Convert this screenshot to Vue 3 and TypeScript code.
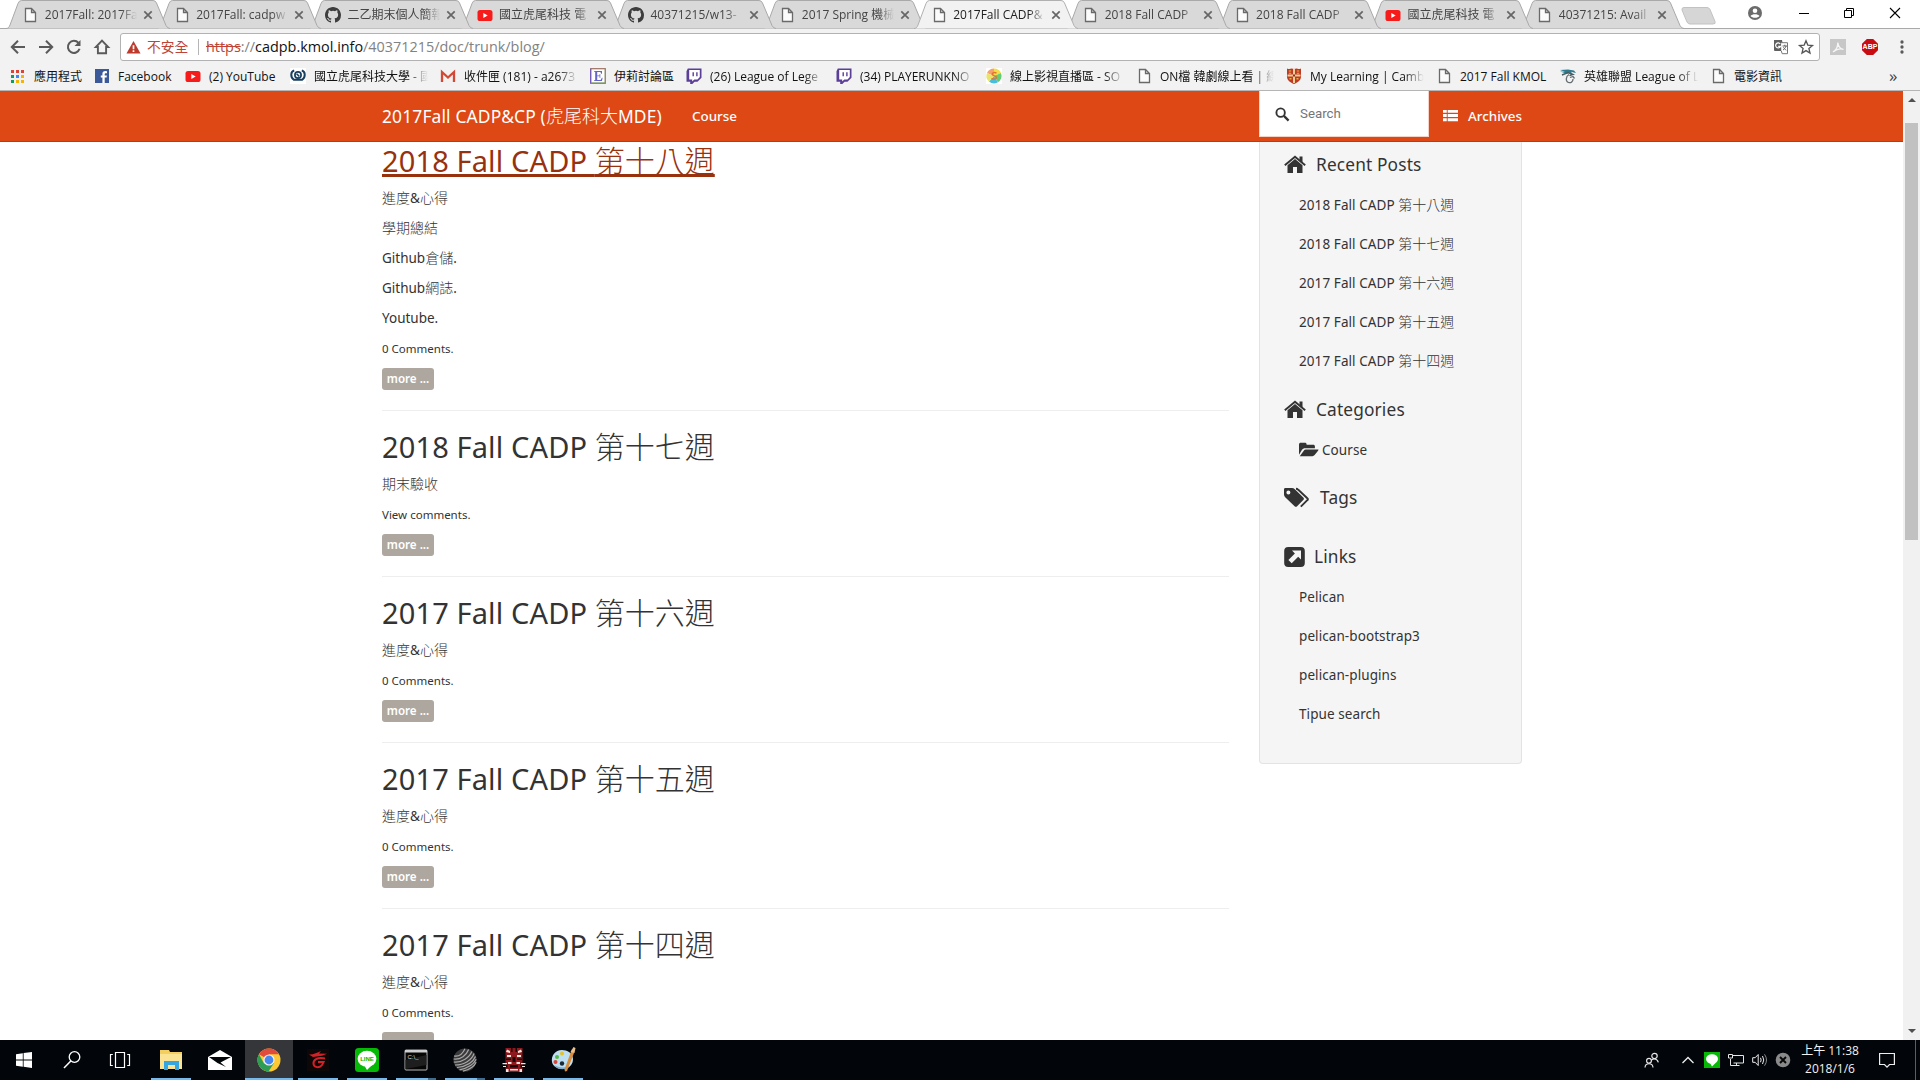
<script setup lang="ts">
interface Run { text: string; zh: boolean }
interface Tab { icon: string; title: string; active?: boolean }
interface Bookmark { icon: string; label: string; width: number }
interface Post { title: string; body: string[]; comments: string; hover?: boolean }
interface Task { name: string; state: 'none' | 'open' | 'active' | 'multi' }

function runs(s: string): Run[] {
  return (s.match(/[\u3000-\u9fff]+|[^\u3000-\u9fff]+/g) ?? []).map(text => ({
    text,
    zh: /[\u3000-\u9fff]/.test(text),
  }))
}

const page = '<path d="M3.500 1.500h6l4 4v9h-10z M9.500 1.500v4h4" fill="#fbfbfb" stroke="#6a6a6a" stroke-width="1.300"/>'
const youtube = '<rect x="0.500" y="3" width="15" height="11" rx="2.600" fill="#f61c1c"/><path d="M6.300 6v5l4.400-2.500z" fill="#fff"/>'
const github = '<path fill="#3d3d3d" d="M8 0C3.58 0 0 3.58 0 8c0 3.54 2.29 6.53 5.47 7.59.4.07.55-.17.55-.38v-1.49c-2.01.37-2.53-.49-2.69-.94-.09-.23-.48-.94-.82-1.13-.28-.15-.68-.52-.01-.53.63-.01 1.08.58 1.23.82.72 1.21 1.87.87 2.33.66.07-.52.28-.87.51-1.07-1.78-.2-3.64-.89-3.64-3.95 0-.87.31-1.59.82-2.15-.08-.2-.36-1.02.08-2.12 0 0 .67-.21 2.2.82a7.6 7.6 0 0 1 4 0c1.53-1.04 2.2-.82 2.2-.82.44 1.1.16 1.92.08 2.12.51.56.82 1.27.82 2.15 0 3.07-1.87 3.75-3.65 3.95.29.25.54.73.54 1.48v2.2c0 .21.15.46.55.38A8 8 0 0 0 16 8c0-4.42-3.58-8-8-8z"/>'
const twitch = '<path fill="#5a3e97" d="M1.800.5h13.700v9.300l-4 4H8.600l-2.300 2.200H4.200v-2.200H.500V3.300z"/><path fill="#fff" d="M3.200 2h10.600v7.100l-2.300 2.300H8.300l-2.100 2v-2h-3z"/><path fill="#5a3e97" d="M6.500 4.300h1.400v4H6.500zM10.200 4.300h1.400v4h-1.400z"/>'

const icons: Record<string, string> = {
  page, youtube, github, twitch,
  apps: '<path fill="#db4437" d="M1 2h3v3H1zM6 2h3v3H6zM11 2h3v3h-3z"/><path fill="#0f9d58" d="M1 7h3v3H1z"/><path fill="#4285f4" d="M6 7h3v3H6z"/><path fill="#f4b400" d="M11 7h3v3h-3zM6 12h3v3H6zM11 12h3v3h-3z"/><path fill="#0f9d58" d="M1 12h3v3H1z"/>',
  facebook: '<rect x="1" y="1" width="14" height="14" fill="#3b5998"/><path fill="#fff" d="M8.400 15V9.500H6.800V7.400h1.600V6c0-2 1.100-2.900 2.900-2.900l1.700.1v2h-1.200c-.9 0-1.100.4-1.100 1.100v1.100h2.200l-.3 2.100h-1.900V15z"/>',
  nfu: '<rect width="16" height="16" fill="#fff"/><path d="M4.200 2.500C.500 3.500.200 9 3.800 11.800h8.400c3.600-2.800 3.300-8.300-.4-9.300" fill="none" stroke="#173f5f" stroke-width="2"/><circle cx="8" cy="7" r="3.100" fill="none" stroke="#173f5f" stroke-width="1.700"/><path d="M6.600 5.800l2.600 2.600" stroke="#173f5f" stroke-width="1.500"/>',
  gmail: '<rect x="1" y="3" width="14" height="11" fill="#f3f0ee"/><path d="M2 14V4l6 5.500L14 4v10" fill="none" stroke="#d14836" stroke-width="2.300"/>',
  eyny: '<rect x=".7" y=".7" width="14.600" height="14.600" fill="#fff" stroke="#9b6f5d" stroke-width="1.200"/><path d="M.700 15.300V.700" stroke="#6a56c8"/><path d="M15.300 1v14H1" fill="none" stroke="#71a060"/><path d="M4 3h8v2.800h-.8L10.400 4H7.200v3.400h2.400V6h.7v4h-.7V8.300H7.200V12h3.400l1.300-2.200h.7L12 13H4v-.8h1.200V3.800H4z" fill="#6464cc"/>',
  rainbow: '<rect width="16" height="16" fill="#fff"/><path d="M8 8L1 5a7.500 7.500 0 0 1 7-4.500z" fill="#f5a070"/><path d="M8 8V.5A7.500 7.500 0 0 1 15 5z" fill="#f4de48"/><path d="M8 8l7-3a7.500 7.500 0 0 1-3 9.200z" fill="#62cd75"/><path d="M8 8l4 6.200A7.500 7.500 0 0 1 3 13.500z" fill="#48bedb"/><path d="M8 8l-5 5.500A7.500 7.500 0 0 1 1 5z" fill="#e9e36b"/><path d="M10.500 5.200C9 3.800 5.800 4.500 6.400 6.600c.5 1.700 3.800 1 4 2.800.1 2-3.400 2.300-4.800.8" fill="none" stroke="#e4732e" stroke-width="1.400"/>',
  shield: '<path d="M1 .5c2 .8 3.500.5 4.500 0 1.500.6 3.500.6 5 0 1 .5 2.500.8 4.500 0v8c0 4-3.500 6-7 7.500-3.500-1.500-7-3.500-7-7.500z" fill="#bd3a25"/><path d="M8 1v14M1.500 7.500h13" stroke="#f1cf94" stroke-width="2"/><path d="M2.800 2.500h2.400v1H2.800zM2.800 4.700h2.400v1H2.800zM10.800 2.500h2.400v1h-2.400zM10.800 4.700h2.400v1h-2.400zM3.500 10h2v1.500h-2zM10.500 10h2v1.500h-2z" fill="#e9b344"/><path d="M7 6.500h2v2H7z" fill="#8e2b1d"/>',
  lol: '<path d="M0 2l8-.5 6 1 2 2.500-5-1.300 2 3-3-2-3 1L0 3.500l5 .2z" fill="#2c7b8f"/><path d="M2 7l6-2.500 5 2-3.500 1.200" fill="none" stroke="#4d5a60" stroke-width="1.400"/><path d="M9 6.500c-3.500 2-3.500 7-.5 8 2.500.8 4.500-1 4.500-3.500M10 9.500l3-1 1.500 2" fill="none" stroke="#636d72" stroke-width="1.300"/>',
  back: '<path d="M15 8H2M8 1.800L1.800 8 8 14.200" fill="none" stroke="#5a5a5a" stroke-width="2"/>',
  forward: '<path d="M1 8h13M8 1.800L14.200 8 8 14.200" fill="none" stroke="#5a5a5a" stroke-width="2"/>',
  reload: '<path d="M13.600 9.800A6 6 0 1 1 12.500 4" fill="none" stroke="#5a5a5a" stroke-width="2"/><path d="M14.500 1v6h-6z" fill="#5a5a5a"/>',
  home: '<path d="M8 1.600L14.200 8h-2.100v6.300H3.900V8H1.800z" fill="none" stroke="#5a5a5a" stroke-width="1.900"/>',
  warn: '<path d="M8 1l7.500 13.500H.5z" fill="#bd3a2c"/><path d="M7.100 5.500h1.800v4.300H7.100zM7.100 11h1.800v1.800H7.100z" fill="#fff"/>',
  translate: '<path d="M1 1h8l2 11H2a1 1 0 0 1-1-1z" fill="#606060"/><path d="M8 3.700h6.500v11H9.200L8.300 12" fill="#fff" stroke="#777"/><path d="M7.200 5a2.500 2.500 0 1 0 .3 2.300H5.200" fill="none" stroke="#fff" stroke-width="1.200"/><path d="M9.500 7h4.500M11.800 5.700V7M13 7c-.4 2-1.500 3-3 4M10.500 8.200c.8 1.500 1.600 2.200 2.800 3" fill="none" stroke="#666"/>',
  star: '<path d="M8 1.800l1.800 4.300 4.700.4-3.600 3 1.100 4.600L8 11.600l-4 2.500 1.100-4.600-3.600-3 4.700-.4z" fill="none" stroke="#555" stroke-width="1.300"/>',
  pdf: '<rect width="16" height="16" fill="#c7c7c7"/><path d="M3 13c3-2 5-5 4.800-9.500C8.500 8 10 10 13.500 10.300 9.500 9 6 10.500 3 13z" fill="none" stroke="#f6f6f6" stroke-width="1.300"/>',
  dots: '<circle cx="8" cy="2.300" r="1.900" fill="#5a5a5a"/><circle cx="8" cy="8" r="1.900" fill="#5a5a5a"/><circle cx="8" cy="13.700" r="1.900" fill="#5a5a5a"/>',
  user: '<circle cx="8" cy="8" r="7" fill="#6b6b6b"/><circle cx="8" cy="5.800" r="2.300" fill="#fff"/><path d="M3.500 11c1.600-2.300 7.400-2.300 9 0-1.700 2.400-7.300 2.400-9 0z" fill="#fff"/>',
  min: '<path d="M3 8.500h10" stroke="#000"/>',
  restore: '<path d="M3.500 5.500h7v7h-7zM5.500 5.500v-2h7v7h-2" fill="none" stroke="#000"/>',
  close: '<path d="M3 3l10 10M13 3L3 13" stroke="#000" stroke-width="1.100"/>',
  tabclose: '<path d="M4.300 4.300l7.400 7.400M11.700 4.300l-7.400 7.400" stroke="#666" stroke-width="1.700"/>',
  search: '<circle cx="6" cy="6" r="4.500" fill="none" stroke="#333" stroke-width="2"/><path d="M9.500 9.500l5 5" stroke="#333" stroke-width="2.400"/>',
  list: '<path d="M0 2h4v3H0zM5 2h11v3H5zM0 6.500h4v3H0zM5 6.500h11v3H5zM0 11h4v3H0zM5 11h11v3H5z" fill="#fff"/>',
}

const sideIcons: Record<string, string> = {
  home: '<path d="M11 5l7.500 6.200V19H13V13H9v6H3.500V11.200z" fill="#333"/><path d="M.8 11.300L11 2.700l10.200 8.600" fill="none" stroke="#333" stroke-width="1.900"/><path d="M15.500 2.500h3V9l-3-2.500z" fill="#333"/>',
  folder: '<path d="M0 14V3.200C0 2 .8 1.500 1.800 1.500h4.500c1 0 1.700.7 1.700 1.700v.3h7c1 0 1.700.7 1.700 1.700v2H6.500c-1.500 0-2.600.6-3.500 1.700z" fill="#333"/><path d="M.8 15.500l4-5.500c.6-.9 1.400-1.400 2.400-1.400H20.500c-.1.400-.2.700-.5 1.100l-3.600 4.700c-.6.700-1.400 1.100-2.300 1.100z" fill="#333"/>',
  tags: '<path fill-rule="evenodd" d="M0 2.500C0 1.500.500 1 1.500 1H8c1 0 2 .5 2.800 1.200l8.500 8.300c.8.8.8 1.700 0 2.500l-6.200 6.200c-.8.8-1.700.8-2.500 0L1.200 10.300C.5 9.500 0 8.500 0 7.500zM4.400 3.500a2 2 0 1 0 0 4 2 2 0 0 0 0-4z" fill="#333"/><path d="M12 1.800c1 0 1.600.3 2.300 1l9 8.400c.8.700.8 1.300 0 2l-6.500 6.500" fill="none" stroke="#333" stroke-width="1.900"/>',
  link: '<rect x=".2" y="1" width="20.600" height="20" rx="4" fill="#333"/><path d="M8 4.500h9v9l-2.800-2.800-6.500 6.500-3.300-3.300 6.500-6.500z" fill="#f5f5f5"/>',
}

const tabs: Tab[] = [
  { icon: 'page', title: '2017Fall: 2017Fa' },
  { icon: 'page', title: '2017Fall: cadpw' },
  { icon: 'github', title: '二乙期末個人簡報' },
  { icon: 'youtube', title: '國立虎尾科技 電' },
  { icon: 'github', title: '40371215/w13-' },
  { icon: 'page', title: '2017 Spring 機械' },
  { icon: 'page', title: '2017Fall CADP&', active: true },
  { icon: 'page', title: '2018 Fall CADP' },
  { icon: 'page', title: '2018 Fall CADP' },
  { icon: 'youtube', title: '國立虎尾科技 電' },
  { icon: 'page', title: '40371215: Avail' },
]

const bookmarks: Bookmark[] = [
  { icon: 'apps', label: '應用程式', width: 48 },
  { icon: 'facebook', label: 'Facebook', width: 55 },
  { icon: 'youtube', label: '(2) YouTube', width: 69 },
  { icon: 'nfu', label: '國立虎尾科技大學 - 國', width: 114 },
  { icon: 'gmail', label: '收件匣 (181) - a2673', width: 114 },
  { icon: 'eyny', label: '伊莉討論區', width: 60 },
  { icon: 'twitch', label: '(26) League of Lege', width: 114 },
  { icon: 'twitch', label: '(34) PLAYERUNKNO', width: 114 },
  { icon: 'rainbow', label: '線上影視直播區 - SO', width: 114 },
  { icon: 'page', label: 'ON檔 韓劇線上看 | 線', width: 114 },
  { icon: 'shield', label: 'My Learning | Camb', width: 114 },
  { icon: 'page', label: '2017 Fall KMOL', width: 88 },
  { icon: 'lol', label: '英雄聯盟 League of L', width: 114 },
  { icon: 'page', label: '電影資訊', width: 48 },
]

const posts: Post[] = [
  { title: '2018 Fall CADP 第十八週', body: ['進度&心得', '學期總結', 'Github倉儲.', 'Github網誌.', 'Youtube.'], comments: '0 Comments.', hover: true },
  { title: '2018 Fall CADP 第十七週', body: ['期末驗收'], comments: 'View comments.' },
  { title: '2017 Fall CADP 第十六週', body: ['進度&心得'], comments: '0 Comments.' },
  { title: '2017 Fall CADP 第十五週', body: ['進度&心得'], comments: '0 Comments.' },
  { title: '2017 Fall CADP 第十四週', body: ['進度&心得'], comments: '0 Comments.' },
]

const links = ['Pelican', 'pelican-bootstrap3', 'pelican-plugins', 'Tipue search']

const taskIcons: Record<string, string> = {
  start: '<path fill="#fff" d="M8 10.200l6.800-1v6.400H8zM15.600 9.100L24 8v7.600h-8.400zM8 16.400h6.800v6.400l-6.800-1zM15.600 16.400H24V24l-8.400-1.200z"/>',
  search: '<circle cx="18.500" cy="13" r="5.300" fill="none" stroke="#fff" stroke-width="1.300"/><path d="M14.800 16.900L8 24" stroke="#fff" stroke-width="1.500"/>',
  view: '<path d="M11.500 8.500h9v15h-9zM8.800 10.500H6.500v11h2.300M23.200 10.500h2.300v11h-2.300" fill="none" stroke="#fff" stroke-width="1.200"/>',
  explorer: '<path d="M5 6h9l1 2h12v17H5z" fill="#f3cf62"/><path d="M5 10h22v15H5z" fill="#fbe394"/><path d="M9 26v-9h15v9h-4v-5h-7v5z" fill="#35a6df"/>',
  mail: '<path d="M4 13L16 6l12 7v13H4z" fill="#fff"/><path d="M5 13h22l-10.500 5.500L22 23l-8.500-4z" fill="#020508"/>',
  chrome: '<circle cx="16" cy="16" r="11.500" fill="#fcc934"/><path d="M16 16L6 10.200A11.500 11.500 0 0 1 26 10.200H16z" fill="#e04b3c"/><path d="M6 10.200A11.500 11.500 0 0 0 15.500 27.500L21 19l-10 .5z" fill="#2d9d56"/><circle cx="16" cy="16" r="5.600" fill="#f2f2f2"/><circle cx="16" cy="16" r="4.400" fill="#4587ee"/>',
  garena: '<rect x="5" y="5" width="22" height="22" fill="#0e0707"/><path d="M7 10.500c4 .5 8-2 12-3.500l-2 2.500 8 .3-5 2-9 1.200z" fill="#d22228"/><path d="M23 14.500c-8-1.500-12 1.500-11.500 5.500.5 3.500 6 4.500 8.500 1l1.500-3h-5.500" fill="none" stroke="#d22228" stroke-width="2"/>',
  line: '<rect x="4" y="4" width="24" height="24" rx="3.500" fill="#06b906"/><ellipse cx="16" cy="14.800" rx="9.400" ry="8" fill="#fff"/><path d="M13 21l3 5 6-6z" fill="#fff"/>',
  cmd: '<rect x="5" y="6" width="22" height="20" rx="1" fill="#060606" stroke="#b7b7b7"/><path d="M5 6h22v2.500H5z" fill="#cfcfcf"/><path d="M5.500 16L26.500 11v10l-21 4z" fill="#1e1e1e"/>',
  sphere: '<circle cx="16" cy="16" r="11.500" fill="#3b3b3b"/><g fill="none" stroke="#a9a9a9" stroke-width="1.200"><path d="M5 12c5 1 9-3 11-7.300"/><path d="M4.600 15c7 1 13-4 15-9.500"/><path d="M4.800 18c8 1 16-5 18-10.500"/><path d="M6 21c9 0 17-5 19-11.500"/><path d="M8 23.500c9-1 16-5 18.500-11"/><path d="M10.500 25.800c8-1.500 14-5 16.700-10.500"/><path d="M14 27.200c6-1.500 11-4.500 13.200-9"/></g>',
  mask: '<path d="M7.500 4h17v24h-17z" fill="#8d181d"/><path d="M9 5.500l3 1.500v2l-4-1zM23 5.500L20 7v2l4-1zM9 11h4v2H9zM19 11h4v2h-4z" fill="#f4e8dc"/><path d="M13 4h1.500v4H13zM17.500 4H19v4h-1.500zM8 14.500h5v1.500H8zM19 14.500h5v1.500h-5zM14.500 13h3v5h-3zM12 21h8v2.500h-8zM7.500 20.500h2v3h-2zM22.500 20.500h2v3h-2z" fill="#1b0506"/><path d="M4.500 19h4.500v1.300H4.500zM23 19h4.500v1.300H23zM5 22h3v1H5zM24 22h3v1h-3zM10 18h3.500v2H10zM18.500 18H22v2h-3.500zM12 25h8v1.500h-8zM8 25h2.500v3H8zM21.500 25H24v3h-2.500z" fill="#f2e5df"/>',
  paint: '<path d="M15 6C8 6 4 12 5 18c1 5 8 9 15 6 3-1 6-4 6-9 0-6-6-9-11-9z" fill="#bddff1"/><path d="M7 21c3 5 11 6 16 1-5 2-11 2-16-1z" fill="#7eabc8"/><circle cx="10" cy="13" r="2" fill="#55b947"/><circle cx="15" cy="9.500" r="2" fill="#e5c229"/><circle cx="8.500" cy="18" r="2" fill="#d94338"/><circle cx="15" cy="19.500" r="2.200" fill="#182838"/><path d="M25 5l2 4-7 18-2 .5-.5-2z" fill="#d88d3c"/><path d="M23.500 8l3-5 2 1-1 5z" fill="#e8c18c"/>',
}

const tasks: Task[] = [
  { name: 'explorer', state: 'open' },
  { name: 'mail', state: 'none' },
  { name: 'chrome', state: 'active' },
  { name: 'garena', state: 'open' },
  { name: 'line', state: 'open' },
  { name: 'cmd', state: 'multi' },
  { name: 'sphere', state: 'multi' },
  { name: 'mask', state: 'open' },
  { name: 'paint', state: 'open' },
]
</script>

<template>
  <div class="screen">
    <header class="chrome">
      <div class="tabstrip">
        <div v-for="(t, i) in tabs" :key="i" class="tab" :class="{ active: t.active }" :style="{ zIndex: t.active ? 20 : 11 - i }">
          <svg class="shape" viewBox="0 0 165 29"><path d="M0 28.500C2 28.500 3 27.500 4 25L12 3.500Q13 .5 15.500.5H147Q149.500.5 150.500 3L160 25.500Q161.500 28.500 164 28.500" /></svg>
          <svg class="ico" viewBox="0 0 16 16" v-html="icons[t.icon]" />
          <span class="label">{{ t.title }}</span>
          <svg class="tclose" viewBox="0 0 16 16" v-html="icons.tabclose" />
        </div>
        <svg class="newtab" viewBox="0 0 36 18"><path d="M3 .5H26q2 0 3 2l5 12q1 2.500-2 2.500H9q-2 0-3-2L1 3Q.5.500 3 .5z" fill="#d6d6d6" stroke="#c2c2c2" /></svg>
        <div class="controls">
          <svg v-for="n in ['user', 'min', 'restore', 'close']" :key="n" :class="n" viewBox="0 0 16 16" v-html="icons[n]" />
        </div>
      </div>
      <div class="toolbar">
        <svg v-for="n in ['back', 'forward', 'reload', 'home']" :key="n" class="nav-ico" viewBox="0 0 16 16" v-html="icons[n]" />
        <div class="omnibox">
          <svg class="warn" viewBox="0 0 16 16" v-html="icons.warn" />
          <span class="insecure">不安全</span>
          <span class="sep" />
          <span class="url"><s>https</s>://<b>cadpb.kmol.info</b>/40371215/doc/trunk/blog/</span>
          <svg class="translate" viewBox="0 0 16 16" v-html="icons.translate" />
          <svg class="star" viewBox="0 0 16 16" v-html="icons.star" />
        </div>
        <svg class="pdf" viewBox="0 0 16 16" v-html="icons.pdf" />
        <span class="abp">ABP</span>
        <svg class="dots" viewBox="0 0 16 16" v-html="icons.dots" />
      </div>
      <div class="bookmarks">
        <div v-for="(b, i) in bookmarks" :key="i" class="bm">
          <svg class="ico" viewBox="0 0 16 16" v-html="icons[b.icon]" />
          <span class="label" :class="{ fade: b.width === 114 }" :style="{ width: b.width + 'px' }">{{ b.label }}</span>
        </div>
        <span class="more-bm">»</span>
      </div>
    </header>

    <div class="viewport">
      <div class="site">
        <nav class="navbar">
          <a class="brand"><span v-for="(r, k) in runs('2017Fall CADP&CP (虎尾科大MDE)')" :key="k" :class="{ zh: r.zh }">{{ r.text }}</span></a>
          <a class="course">Course</a>
          <div class="search"><svg viewBox="0 0 16 16" v-html="icons.search" /><span>Search</span></div>
          <a class="archives"><svg viewBox="0 0 16 16" v-html="icons.list" /><span>Archives</span></a>
        </nav>
        <div class="columns">
          <main>
            <article v-for="(p, i) in posts" :key="i">
              <h2><a :class="{ hover: p.hover }"><span v-for="(r, k) in runs(p.title)" :key="k" :class="{ zh: r.zh }">{{ r.text }}</span></a></h2>
              <p v-for="(l, j) in p.body" :key="j"><span v-for="(r, k) in runs(l)" :key="k" :class="{ zh: r.zh }">{{ r.text }}</span></p>
              <p class="comments">{{ p.comments }}</p>
              <a class="btn">more ...</a>
              <hr>
            </article>
          </main>
          <aside>
            <h4><svg class="i-home" viewBox="0 0 22 22" v-html="sideIcons.home" />Recent Posts</h4>
            <ul>
              <li v-for="(p, i) in posts" :key="i"><span v-for="(r, k) in runs(p.title)" :key="k" :class="{ zh: r.zh }">{{ r.text }}</span></li>
            </ul>
            <h4 class="g10"><svg class="i-home" viewBox="0 0 22 22" v-html="sideIcons.home" />Categories</h4>
            <ul><li><svg class="i-folder" viewBox="0 0 21 17" v-html="sideIcons.folder" />Course</li></ul>
            <h4 class="g9"><svg class="i-tags" viewBox="0 0 26 22" v-html="sideIcons.tags" />Tags</h4>
            <h4 class="g19"><svg class="i-link" viewBox="0 0 22 22" v-html="sideIcons.link" />Links</h4>
            <ul><li v-for="l in links" :key="l">{{ l }}</li></ul>
          </aside>
        </div>
      </div>
      <div class="scrollbar">
        <svg viewBox="0 0 17 17"><path d="M5 11h8L9 7z" fill="#505050" /></svg>
        <div class="track"><div class="thumb" /></div>
        <svg viewBox="0 0 17 17"><path d="M5 6h8l-4 4z" fill="#505050" /></svg>
      </div>
    </div>

    <footer class="taskbar">
      <div class="sys">
        <svg v-for="n in ['start', 'search', 'view']" :key="n" viewBox="0 0 32 32" v-html="taskIcons[n]" />
      </div>
      <div v-for="t in tasks" :key="t.name" class="task" :class="t.state">
        <svg viewBox="0 0 32 32" v-html="taskIcons[t.name]" />
        <span v-if="t.name === 'line'" class="tag line-tag">LINE</span>
        <span v-if="t.name === 'cmd'" class="tag cmd-tag">C:\_</span>
      </div>
      <div class="tray">
        <svg class="people" viewBox="0 0 16 16"><g fill="none" stroke="#e6e6e6" stroke-width="1.200"><circle cx="10.500" cy="4" r="2.700" /><path d="M7.300 8.500c1.500-2.300 6-2.300 7 1.800" /><circle cx="5" cy="8.800" r="2.400" /><path d="M1 15.500c.3-5 7.700-5 8 0" /></g></svg>
        <svg class="chev" viewBox="0 0 12 8"><path d="M.5 7L6 1.500 11.500 7" fill="none" stroke="#eee" stroke-width="1.300" /></svg>
        <svg class="t-line" viewBox="0 0 16 16"><rect width="16" height="16" fill="#06b906" /><ellipse cx="8" cy="7" rx="6" ry="4.800" fill="#fff" /><path d="M6 11l2 3.500 4-4z" fill="#fff" /></svg>
        <svg class="net" viewBox="0 0 16 16"><path d="M4 3.500h11.500v7.500H5.500M2.500 7v6.500h9M8.500 11v2.500M.5 2.500h4V6h-4z" fill="none" stroke="#e6e6e6" /></svg>
        <svg class="vol" viewBox="0 0 16 16"><path d="M.7 5.700h2.500l3-3.200v11l-3-3.200H.7z" fill="none" stroke="#eee" /><path d="M8.500 5.800q1.300 2.200 0 4.400M10.500 4q2.500 4 0 8" fill="none" stroke="#eee" /><path d="M12.500 2.300q4 5.700 0 11.400" fill="none" stroke="#888" /></svg>
        <svg class="xc" viewBox="0 0 16 16"><circle cx="8" cy="8" r="7.300" fill="#8a8a8a" /><path d="M5 5l6 6M11 5l-6 6" stroke="#080808" stroke-width="1.900" /></svg>
        <div class="clock"><span>上午 11:38</span><span>2018/1/6</span></div>
        <svg class="note" viewBox="0 0 16 16"><path d="M.6 1.500h14.800v11H10.500L8 15.200 5.500 12.500H.6z" fill="none" stroke="#eee" stroke-width="1.200" /></svg>
        <span class="desk" />
      </div>
    </footer>
  </div>
</template>

<style>
html, body { margin: 0; overflow: hidden; }
</style>

<style scoped>
* { box-sizing: border-box; }
.screen { width: 1920px; height: 1080px; overflow: hidden; display: flex; flex-direction: column; background: #fff; font-family: "Open Sans", "Noto Sans CJK TC", sans-serif; white-space: nowrap; }
svg { display: block; flex: none; overflow: visible; }

.chrome { height: 91px; flex: none; background: #f2f2f2; border-bottom: 1px solid #b6b4b4; }
.tabstrip { height: 29px; background: #fff; display: flex; padding-left: 6px; box-shadow: inset 0 -1px #a9a9a9; }
.tab { position: relative; width: 165px; height: 29px; margin-right: -13.600px; flex: none; display: flex; align-items: center; padding-left: 16.300px; }
.shape { position: absolute; left: 0; top: 0; width: 165px; height: 29px; }
.shape path { fill: #d9d9d9; stroke: #a9a9a9; }
.active .shape path { fill: #f2f2f2; stroke: #b0b0b0; }
.tab .ico, .tab .tclose { position: relative; width: 16px; height: 16px; }
.tab .label { position: relative; width: 92px; margin-left: 6.500px; font-size: 12px; line-height: 20px; color: #444; -webkit-mask-image: linear-gradient(90deg, #000 76px, transparent 92px); mask-image: linear-gradient(90deg, #000 76px, transparent 92px); }
.tab.active .label { color: #222; }
.tab .tclose { margin-left: 3.200px; }
.newtab { width: 36px; height: 18px; margin: 7px 0 0 10px; }
.controls { display: flex; flex: 1; padding-top: 5px; }
.controls svg { width: 16px; height: 16px; }
.controls .user { margin-left: 30px; }
.controls .min { margin-left: 33px; }
.controls .restore { margin-left: 29px; }
.controls .close { margin-left: 30px; }

.toolbar { height: 33px; display: flex; align-items: center; padding: 3px 0 0 10px; }
.nav-ico { width: 16px; height: 16px; margin-right: 12px; }
.omnibox { width: 1700px; height: 28px; margin-left: -2px; border: 1px solid #b2b2b2; border-radius: 3px; background: #fff; display: flex; align-items: center; }
.warn { width: 15px; height: 15px; margin-left: 5px; }
.insecure { margin-left: 6px; font-size: 13.800px; color: #bd4436; width: 42px; line-height: 24px; }
.sep { width: 1px; height: 16px; margin-left: 9px; background: #b5b5b5; }
.url { margin-left: 7px; font-size: 14.400px; color: #828282; flex: 1; line-height: 24px; }
.url s { color: #bd4436; }
.url b { font-weight: 400; color: #111; }
.translate { width: 16px; height: 16px; margin-right: 9px; }
.star { width: 16px; height: 16px; margin-right: 5px; }
.pdf { width: 16px; height: 16px; margin-left: 10px; }
.abp { width: 16px; height: 16px; margin-left: 16px; background: #c70d12; color: #fff; font: 700 7px/16px "Liberation Sans", sans-serif; text-align: center; clip-path: polygon(30% 0, 70% 0, 100% 30%, 100% 70%, 70% 100%, 30% 100%, 0 70%, 0 30%); }
.dots { width: 14px; height: 14px; margin-left: 17px; }
.bookmarks { height: 28px; display: flex; align-items: center; padding-left: 10px; }
.bm { display: flex; align-items: center; gap: 8px; margin-right: 12px; }
.bm .ico { width: 16px; height: 16px; }
.bm .label { display: block; margin-top: 1px; font-size: 12px; line-height: 20px; color: #111; }
.bm .label.fade { -webkit-mask-image: linear-gradient(90deg, #000 94px, transparent 114px); mask-image: linear-gradient(90deg, #000 94px, transparent 114px); }
.more-bm { margin-left: 95px; font-size: 17px; line-height: 20px; color: #444; }

.viewport { height: 949px; flex: none; display: flex; overflow: hidden; }
.site { width: 1903px; height: 949px; overflow: hidden; font-family: "Noto Sans", "Noto Sans CJK TC", sans-serif; color: #333; }
.site .zh { line-height: 0; letter-spacing: 0; font-weight: 300; }
.navbar { height: 51px; background: #dd4814; border-bottom: 1px solid #b53d14; display: flex; padding-left: 382px; color: #fff; }
.brand { width: 310px; font-size: 17.400px; line-height: 51px; letter-spacing: 0.150px; }
.brand .zh { font-size: 18px; }
.course { width: 567px; font-size: 13.400px; line-height: 51px; font-weight: 500; }
.search { width: 170px; height: 46px; background: #fff; border: 1px solid #f3d3c7; border-top: 0; display: flex; align-items: center; padding-left: 15px; }
.search svg { width: 15px; height: 15px; margin-top: 1px; }
.search span { margin-left: 10px; font: 13.300px/20px Roboto, sans-serif; color: #757575; }
.archives { display: flex; align-items: center; height: 50px; margin-left: 14px; font-size: 13.400px; font-weight: 500; }
.archives svg { width: 15px; height: 15px; margin: -2px 10px 0 0; }
.columns { display: flex; padding-left: 382px; }
main { width: 847px; margin-right: 30px; padding-top: 2px; }
h2 { margin: 0 0 11px; height: 33px; font-size: 29px; line-height: 33px; font-weight: 400; letter-spacing: 0.130px; }
h2 .zh { font-size: 30px; }
h2 .hover { color: #97310e; text-decoration: underline; text-decoration-thickness: 2.500px; text-underline-offset: 2px; text-decoration-skip-ink: none; }
p { margin: 0 0 10px; height: 20px; font-size: 13.500px; line-height: 21px; }
p .zh, li .zh { font-size: 14px; }
.comments { font-size: 11.500px; line-height: 22px; }
.btn { display: block; width: 52px; height: 22px; border-radius: 3px; background: #aea79f; color: #fff; font-size: 11.600px; line-height: 22px; font-weight: 600; text-align: center; }
hr { height: 1px; border: 0; margin: 20px 0 19px; background: #eee; }
aside { width: 263px; height: 622px; background: #f5f5f5; border: 1px solid #e3e3e3; border-top: 0; border-radius: 0 0 4px 4px; padding: 3px 0 0 24px; }
h4 { margin: 0; height: 40px; display: flex; align-items: center; font-size: 17.300px; font-weight: 400; line-height: 24px; letter-spacing: 0.150px; padding-bottom: 1px; }
.g10 { margin-top: 10px; }
.g9 { margin-top: 9px; }
.g19 { margin-top: 19px; }
ul { list-style: none; margin: 0; padding: 0 0 0 15px; }
li { height: 39px; display: flex; align-items: center; font-size: 13.500px; line-height: 20px; letter-spacing: 0.080px; white-space: pre; }
.i-home { width: 22px; height: 22px; margin-right: 10px; }
.i-folder { width: 20px; height: 17px; margin-right: 3px; }
.i-tags { width: 26px; height: 22px; margin-right: 10px; }
.i-link { width: 22px; height: 22px; margin-right: 8px; }
.scrollbar { width: 17px; display: flex; flex-direction: column; background: #f1f1f1; }
.scrollbar svg { width: 17px; height: 17px; }
.track { flex: 1; padding: 15px 2px 0; }
.thumb { width: 13px; height: 417px; background: #c1c1c1; }

.taskbar { height: 40px; flex: none; background: #020509; display: flex; }
.sys { display: flex; width: 147px; padding: 4px 8px; gap: 16px; }
.sys svg, .task svg { width: 32px; height: 32px; }
.task { position: relative; width: 48px; margin-right: 1px; height: 40px; display: flex; justify-content: center; padding-top: 4px; }
.task.active { background: #343639; }
.task.open::after, .task.multi::after, .task.active::after { content: ""; position: absolute; left: 4px; right: 4px; bottom: 0; height: 2px; background: #76b9ed; }
.task.active::after { left: 0; right: 0; }
.task.multi::after { background: linear-gradient(90deg, #76b9ed 32px, #3f6d91 32px); }
.tag { position: absolute; left: 0; width: 48px; text-align: center; font-family: "Liberation Sans", sans-serif; }
.line-tag { top: 15px; font-size: 6px; line-height: 8px; font-weight: 700; color: #06b906; }
.cmd-tag { top: 13px; left: -3px; font-size: 6px; line-height: 8px; color: #ddd; }
.tray { display: flex; align-items: center; margin-left: auto; color: #f2f2f2; }
.tray svg { width: 16px; height: 16px; }
.tray .chev { width: 12px; height: 8px; margin: 0 10px 0 22px; }
.tray .net { margin-left: 8px; }
.tray .vol { margin-left: 8px; }
.tray .xc { margin-left: 7px; }
.clock { width: 60px; margin: 0 19px 0 9px; display: flex; flex-direction: column; align-items: center; font-size: 12px; line-height: 18px; height: 38px; padding-top: 1px; }
.desk { width: 5px; height: 40px; margin-left: 20px; border-left: 1px solid #5c5f62; }
</style>
